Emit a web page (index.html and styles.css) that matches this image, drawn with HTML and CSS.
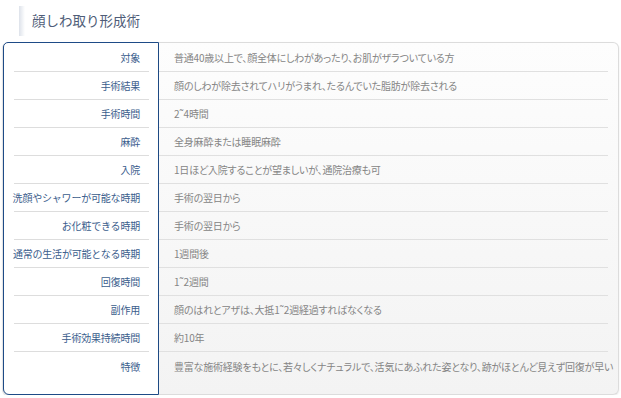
FILE: index.html
```html
<!DOCTYPE html>
<html lang="ja">
<head>
<meta charset="utf-8">
<link rel="stylesheet" href="styles.css">
</head>
<body>
<div class="title">
  <div class="title-bar"></div>
  <h1>顔しわ取り形成術</h1>
</div>
<div class="table">
  <div class="labels">
    <div class="row">対象</div>
    <div class="row">手術結果</div>
    <div class="row">手術時間</div>
    <div class="row">麻酔</div>
    <div class="row">入院</div>
    <div class="row">洗顔やシャワーが可能な時期</div>
    <div class="row">お化粧できる時期</div>
    <div class="row">通常の生活が可能となる時期</div>
    <div class="row">回復時間</div>
    <div class="row">副作用</div>
    <div class="row">手術効果持続時間</div>
    <div class="row last">特徴</div>
  </div>
  <div class="values">
    <div class="row">普通40歳以上で、顔全体にしわがあったり、お肌がザラついている方</div>
    <div class="row">顔のしわが除去されてハリがうまれ、たるんでいた脂肪が除去される</div>
    <div class="row">2˜4時間</div>
    <div class="row">全身麻酔または睡眠麻酔</div>
    <div class="row">1日ほど入院することが望ましいが、通院治療も可</div>
    <div class="row">手術の翌日から</div>
    <div class="row">手術の翌日から</div>
    <div class="row">1週間後</div>
    <div class="row">1˜2週間</div>
    <div class="row">顔のはれとアザは、大抵1˜2週経過すればなくなる</div>
    <div class="row">約10年</div>
    <div class="row last">豊富な施術経験をもとに、若々しくナチュラルで、活気にあふれた姿となり、跡がほとんど見えず回復が早い</div>
  </div>
</div>
</body>
</html>
```
FILE: styles.css
```css
* { box-sizing: border-box; }
body {
  margin: 0;
  background: #ffffff;
  font-family: "Noto Sans CJK JP", "Noto Sans", sans-serif;
}
.title {
  height: 42px;
  display: flex;
  align-items: center;
  padding-left: 19px;
}
.title-bar {
  width: 6px;
  height: 30px;
  background: linear-gradient(to right, #dde2ea, rgba(255,255,255,0));
}
.title h1 {
  margin: 0 0 0 7px;
  font-size: 13.5px;
  font-weight: normal;
  color: #4f5d78;
  position: relative;
  top: -1px;
}
.table {
  display: flex;
  margin-left: 3px;
  width: 616px;
  height: 353px;
}
.labels {
  flex: none;
  width: 156px;
  border: 1px solid #1e4b87;
  border-radius: 5px 0 0 6px;
  padding: 1px 9px 0 10px;
  background: #fff;
  box-shadow: -1px 1px 1px rgba(0,0,0,0.12);
  overflow: hidden;
}
.labels .row {
  height: 28px;
  border-bottom: 1px solid #dddddd;
  display: flex;
  align-items: center;
  justify-content: flex-end;
  padding-right: 9px;
  font-size: 10px;
  letter-spacing: -0.2px;
  color: #3a5d8c;
  white-space: nowrap;
}
.values {
  flex: 1;
  min-width: 0;
  border: 1px solid #dcdcdc;
  border-left: none;
  border-radius: 0 6px 6px 0;
  padding: 1px 10px 0 0;
  background: linear-gradient(to bottom, #fdfdfd, #f3f3f3);
  box-shadow: 0 1px 2px rgba(0,0,0,0.1);
}
.values .row {
  height: 28px;
  border-bottom: 1px solid #e0e0e0;
  display: flex;
  align-items: center;
  padding-left: 15px;
  font-size: 10px;
  letter-spacing: -0.2px;
  color: #858585;
  white-space: nowrap;
  font-feature-settings: "palt";
}
.row.last { border-bottom: none; }
```
